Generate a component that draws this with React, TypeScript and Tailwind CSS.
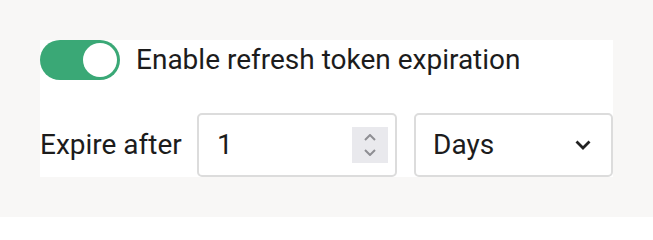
import React from 'react';

export default function App() {
  return (
    <div className="min-h-[217px] w-[653px] bg-[#f8f7f6] pt-[40px] pl-[40px] font-['Roboto',sans-serif] text-[#1c1c1c]">
      <div className="w-[573px] h-[137px] bg-white flex flex-col">
        <div className="flex items-center gap-4 h-[40px]">
          <button className="relative w-[80px] h-[40px] rounded-full bg-[#3aa876] shrink-0">
            <span className="absolute right-[3px] top-[3px] w-[34px] h-[34px] rounded-full bg-white" />
          </button>
          <span className="text-[28px] leading-none">Enable refresh token expiration</span>
        </div>
        <div className="flex items-center mt-[33px] h-[64px]">
          <span className="text-[28px] leading-none w-[157px] shrink-0">Expire after</span>
          <div className="flex items-center w-[200px] h-[64px] border-2 border-[#dcdcdc] rounded-[5px] pl-[18px] pr-[7px]">
            <span className="text-[28px] leading-none flex-1">1</span>
            <span className="w-[36px] h-[36px] bg-[#e9e9ed] flex flex-col items-center justify-center gap-[8px]">
              <svg width="12" height="7" viewBox="0 0 12 7" fill="none" stroke="#8e8e93" strokeWidth="2">
                <path d="M1 6 6 1 11 6" />
              </svg>
              <svg width="12" height="7" viewBox="0 0 12 7" fill="none" stroke="#8e8e93" strokeWidth="2">
                <path d="M1 1 6 6 11 1" />
              </svg>
            </span>
          </div>
          <div className="ml-[17px] flex items-center w-[199px] h-[64px] border-2 border-[#dcdcdc] rounded-[5px] pl-[17px] pr-[20px]">
            <span className="text-[28px] leading-none flex-1">Days</span>
            <svg width="16" height="10" viewBox="0 0 16 10" fill="none" stroke="#222" strokeWidth="2.8">
              <path d="M1.5 1.5 8 8 14.5 1.5" />
            </svg>
          </div>
        </div>
      </div>
    </div>
  );
}
